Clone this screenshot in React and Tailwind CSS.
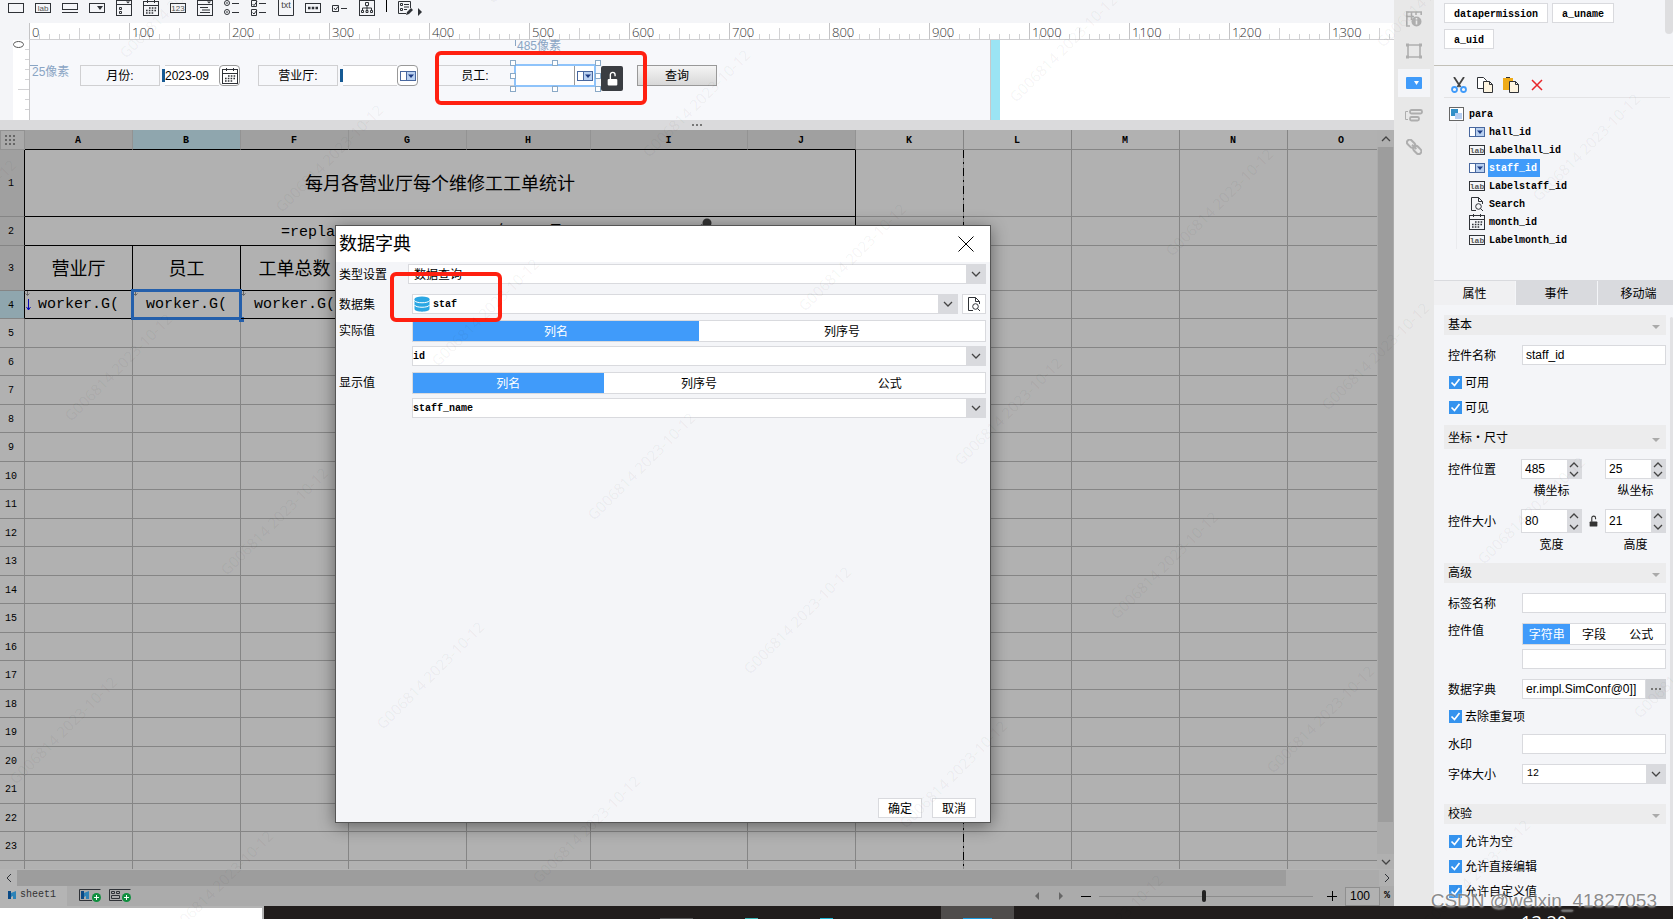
import { useState } from "react";

const MONO = "font-[family-name:'Liberation_Mono','Noto_Sans_CJK_SC',monospace]";

const COLUMNS = ["A", "B", "F", "G", "H", "I", "J", "K", "L", "M", "N", "O"];
const EMPTY_ROWS = Array.from({ length: 20 }, (_, i) => i + 5);

export default function App() {
  return (
    <div className="relative flex h-screen flex-col overflow-hidden bg-[#f4f5f8] font-[family-name:'Liberation_Sans','Noto_Sans_CJK_SC',sans-serif] text-xs text-black">
      <div className="flex min-h-0 flex-1">
        <main className="relative flex min-w-0 flex-1 flex-col">
          <WidgetToolbar />
          <ParamPane />
          <Spreadsheet />
          <StatusBar />
          <DictDialog />
        </main>
        <SideStrip />
        <Inspector />
      </div>
      <Taskbar />
      <Watermarks />
      <p className="pointer-events-none absolute right-4 bottom-1.5 text-[19px] leading-6 text-[#6e6e6e]/80 [text-shadow:0_0_2px_#fff]">
        CSDN @weixin_41827053
      </p>
    </div>
  );
}

/* ---------- icons ---------- */

function Icon({ children, className = "h-4 w-4", viewBox = "0 0 16 16" }) {
  return (
    <svg
      viewBox={viewBox}
      className={`${className} shrink-0`}
      fill="none"
      stroke="#2f3237"
      strokeWidth="1"
      aria-hidden="true"
    >
      {children}
    </svg>
  );
}

function LabIcon({ text = "lab" }) {
  return (
    <Icon>
      <rect x=".5" y="3.5" width="15" height="9" />
      <text x="8" y="11" textAnchor="middle" fontSize="8" fill="#555" stroke="none">
        {text}
      </text>
    </Icon>
  );
}

function CalendarIcon() {
  return (
    <Icon>
      <rect x=".5" y="1.5" width="15" height="14" />
      <path d="M0 5.5h16M4.5 0v3M11.5 0v3" />
      <path d="M6 8h8M3 10.5h11M3 13h8" strokeWidth="1.6" strokeDasharray="1.6 1.2" />
    </Icon>
  );
}

function ComboIcon() {
  return (
    <Icon>
      <rect x=".5" y="3.5" width="15" height="9" fill="#fff" stroke="#48679e" />
      <rect x="6.5" y="3.5" width="9" height="9" fill="#b9d0f0" stroke="#48679e" />
      <path d="M8 6.500h6L11 10z" fill="#1d3b82" stroke="none" />
    </Icon>
  );
}

function SearchDocIcon() {
  return (
    <Icon>
      <path d="M7 14.500H2.500V1.500H9.500L13.500 5.500V8M9.500 1.500V5.500H13.500" />
      <circle cx="9.500" cy="10.500" r="2.800" />
      <path d="M11.500 12.500l2.500 2.500" />
    </Icon>
  );
}

function Chevron({ up = false, className = "h-2 w-2.5" }) {
  return (
    <Icon viewBox="0 0 10 8" className={className}>
      <path d={up ? "M1 6l4-4 4 4" : "M1 2l4 4 4-4"} stroke="#444" strokeWidth="1.300" />
    </Icon>
  );
}

function LockOpen({ color, className }) {
  return (
    <Icon viewBox="0 0 10 14" className={className}>
      <path d="M3 8V3.500a2.200 2.200 0 0 1 4.400 0V5" stroke={color} strokeWidth="1.300" />
      <rect x=".5" y="7.500" width="9" height="6" rx="1" fill={color} stroke="none" />
    </Icon>
  );
}

/* ---------- widget toolbar ---------- */

function WidgetToolbar() {
  return (
    <div className="flex h-[23px] items-start gap-[11px] overflow-hidden pl-2">
      <Icon><rect x=".5" y="3.5" width="15" height="9" /></Icon>
      <LabIcon />
      <Icon>
        <rect x=".5" y="3.5" width="15" height="6" />
        <path d="M0 12.500h16" />
      </Icon>
      <Icon>
        <rect x=".5" y="3.5" width="15" height="9" />
        <path d="M8 6h6l-3 4z" fill="#2f3237" stroke="none" />
      </Icon>
      <Icon>
        <rect x=".5" y=".5" width="15" height="15" />
        <path d="M0 4.500h16" />
        <path d="M10 1.500h4l-2 2z" fill="#2f3237" stroke="none" />
        <path d="M3.500 7.500h2v2h-2zM3.500 11.500h2v2h-2z" />
      </Icon>
      <CalendarIcon />
      <LabIcon text="123" />
      <Icon>
        <rect x=".5" y=".5" width="15" height="15" />
        <path d="M0 4.500h16M3 7.500h8M5 10h8M3 12.500h10" />
        <path d="M10 1.500h4l-2 2z" fill="#2f3237" stroke="none" />
      </Icon>
      <Icon>
        <circle cx="3" cy="3" r="2.500" />
        <circle cx="3" cy="12" r="2.500" />
        <path d="M2 3h2M2 12h2M8 3.500h7M8 12.500h7" />
      </Icon>
      <Icon>
        <path d="M.5.5h5v6h-5zM.5 9.500h5v6h-5zM8 3.500h7M8 12.500h7M1.500 4l1.500 1.500 3-4M1.500 12.500L3 14l3-4" />
      </Icon>
      <Icon>
        <path d="M.5 0v15.500h15V0" />
        <text x="8" y="8" textAnchor="middle" fontSize="9" fill="#444" stroke="none">txt</text>
      </Icon>
      <Icon>
        <rect x=".5" y="3.5" width="15" height="9" />
        <path d="M3 8h10" strokeWidth="2.500" strokeDasharray="2.500 1.250" />
      </Icon>
      <Icon>
        <path d="M.5 5.500h6v6h-6zM2 8l1.500 2L6 6.500M9 8.500h6" />
      </Icon>
      <Icon>
        <rect x=".5" y=".5" width="15" height="15" />
        <path d="M6.500 2.500h3v3h-3zM2.500 10.500h2v2h-2zM7 10.500h2v2H7zM11.500 10.500h2v2h-2zM8 6v4M3.500 10V8h9v2" />
      </Icon>
      <span className="h-3 w-px bg-black" />
      <div className="flex gap-1">
        <Icon>
          <path d="M8 13.500H.5V1.500h12V8" />
          <path d="M2.500 3.500h2v2h-2zM2.500 8.500h2v2h-2zM6 4.500h5M6 7h5M6 9.500h3" />
          <path d="M8 15l1-3 4-4 2 2-4 4z" fill="#2f3237" stroke="none" />
        </Icon>
        <Icon viewBox="0 0 4 16" className="h-4 w-1">
          <path d="M0 8l4 4-4 4z" fill="#2f3237" stroke="none" />
        </Icon>
      </div>
    </div>
  );
}

/* ---------- parameter pane ---------- */

function Ruler() {
  const marks = Array.from({ length: 14 }, (_, i) => i * 100);
  return (
    <div className="ml-[29px] flex h-[17px] overflow-hidden border-b border-[#d0d0d2] bg-white">
      {marks.map((mark) => (
        <div
          key={mark}
          className="relative w-[100px] shrink-0 border-l border-[#c4c4c6] pl-0.5 font-[family-name:'Open_Sans',sans-serif] text-[13px] leading-[18px] font-light text-[#333]"
        >
          <svg className="absolute inset-0 h-4 w-full" stroke="#d2d2d4" aria-hidden="true">
            <path d="M49.500 5v11M9.500 11v5M19.500 11v5M29.500 11v5M39.500 11v5M59.500 11v5M69.500 11v5M79.500 11v5M89.500 11v5" />
          </svg>
          <span className="relative">{mark}</span>
        </div>
      ))}
    </div>
  );
}

function ParamPane() {
  return (
    <section className="shrink-0">
      <Ruler />
      <div className="flex h-20">
        <div className="ml-[13px] w-[17px] shrink-0 border-r border-[#c8c8ca] bg-white">
          <svg className="h-20 w-4" stroke="#d2d2d4" aria-hidden="true">
            <path d="M12 9.500h4M12 19.500h4M12 29.500h4M12 39.500h4M5 49.500h11M12 59.500h4M12 69.500h4" />
            <ellipse cx="5.500" cy="4.500" rx="5" ry="3" fill="none" stroke="#555" />
          </svg>
        </div>
        {/* widget canvas, items sit at their own design coordinates */}
        <div className="relative w-[961px] shrink-0 border-r border-[#c8c8ca] bg-[#f7f8fb]">
          <span className="absolute top-[25px] left-0 w-2 border-t border-[#8aa5c4]" />
          <span className="absolute top-[24px] left-[2px] leading-4 text-[#8aa5c4]">25像素</span>
          <span className="absolute top-0 left-[485px] h-1.5 border-l border-[#8aa5c4]" />
          <span className="absolute -top-0.5 left-[487px] leading-4 text-[#8aa5c4]">485像素</span>

          <label htmlFor="p-month" className="absolute top-[25px] left-[50px] flex h-[21px] w-20 items-center justify-center border border-[#d0d0d2]">
            月份:
          </label>
          <div className="absolute top-[25px] left-[130px] flex h-[21px] w-20">
            <span className="my-1 ml-0.5 w-[3px] bg-[#165a94]" />
            <input id="p-month" defaultValue="2023-09" className="min-w-0 flex-1 border-y border-[#d0d0d2] bg-white" />
            <button aria-label="选择月份" className="flex w-[21px] items-center justify-center rounded-sm border border-[#999] bg-white">
              <CalendarIcon />
            </button>
          </div>

          <label htmlFor="p-hall" className="absolute top-[25px] left-[228px] flex h-[21px] w-20 items-center justify-center border border-[#d0d0d2]">
            营业厅:
          </label>
          <div className="absolute top-[25px] left-[308px] flex h-[21px] w-20">
            <span className="my-1 ml-0.5 w-[3px] bg-[#165a94]" />
            <input id="p-hall" className="min-w-0 flex-1 border-y border-[#d0d0d2] bg-white" />
            <button aria-label="选择营业厅" className="flex w-[21px] items-center justify-center rounded-sm border border-[#999] bg-white">
              <ComboIcon />
            </button>
          </div>

          <label htmlFor="p-staff" className="absolute top-[25px] left-[405px] flex h-[21px] w-20 items-center justify-center border-y border-[#d0d0d2]">
            员工:
          </label>
          <div className="absolute top-[24px] left-[484px] flex h-[23px] w-[82px] border-2 border-[#8ec3fa] bg-white">
            <input id="p-staff" className="min-w-0 flex-1" />
            <span className="flex w-5 items-center justify-center border-l border-[#999]">
              <ComboIcon />
            </span>
          </div>
          <SelectionHandles />
          <button aria-label="解锁" className="absolute top-[26px] left-[571px] flex h-[25px] w-[22px] items-center justify-center rounded-xs bg-[#3a3d42]">
            <LockOpen color="#fff" className="h-[15px] w-[11px]" />
          </button>
          <button className="absolute top-[25px] left-[607px] h-[21px] w-20 border border-[#999] bg-gradient-to-b from-[#f4f4f4] to-[#d8d8d8]">
            查询
          </button>
          <span className="pointer-events-none absolute top-[11px] left-[405px] h-[54px] w-[212px] rounded-md border-4 border-[#ff2010]" />
        </div>
        <div className="w-[9px] shrink-0 bg-[#9be4f4]" />
        <div className="flex-1 bg-white" />
      </div>
      <div className="flex h-2.5 items-center justify-center gap-0.5 bg-[#dadadc]">
        <span className="size-0.5 bg-[#777]" />
        <span className="size-0.5 bg-[#777]" />
        <span className="size-0.5 bg-[#777]" />
      </div>
    </section>
  );
}

function SelectionHandles() {
  const points = [[0, 0], [42, 0], [85, 0], [0, 13], [85, 13], [0, 26], [42, 26], [85, 26]];
  return (
    <svg className="absolute top-[20px] left-[480px] h-8 w-24" aria-hidden="true">
      {points.map(([x, y]) => (
        <rect key={`${x}-${y}`} x={x + 0.5} y={y + 0.5} width="5" height="5" fill="#fff" stroke="#8aa9c6" />
      ))}
    </svg>
  );
}

/* ---------- spreadsheet ---------- */

function RowHead({ n, className }) {
  return (
    <th className={`border-r border-b border-[#858585] p-0 pt-0.5 pr-0.5 text-center font-normal ${className}`}>{n}</th>
  );
}

function PlainCells({ count }) {
  return Array.from({ length: count }, (_, i) => (
    <td key={i} className="border-r border-b border-[#858585] p-0" />
  ));
}

function TextCell({ children }) {
  return (
    <td className="border-r border-b border-black p-0 pt-[3px] text-center text-lg">{children}</td>
  );
}

function FormulaCell({ first = false, selected = false }) {
  return (
    <td className="relative border-r border-b border-black p-0 pt-0.5 text-center align-top text-[15px] leading-6">
      <svg className="absolute top-0 left-0 h-6 w-4" fill="none" aria-hidden="true">
        <path d="M2.500 0v4M.5 2.500l2 2 2-2" stroke="#666" />
        {first && <path d="M3.500 8v11M1.500 16l2 3 2-3" stroke="#0808b8" />}
      </svg>
      worker.G(
      {selected && (
        <>
          <span className="absolute -top-0.5 -right-0.5 -bottom-0.5 -left-0.5 border-3 border-[#245fab]" />
          <span className="absolute -right-1 -bottom-1 size-[5px] bg-[#245fab]" />
        </>
      )}
    </td>
  );
}

function Spreadsheet() {
  return (
    <section className="flex min-h-0 flex-1 flex-col">
      <div className="flex min-h-0 flex-1">
        <div className="relative min-w-0 flex-1 overflow-hidden bg-[#b1b1b1]">
          <table className={`w-0 table-fixed border-separate border-spacing-0 text-[10px] ${MONO}`}>
            <colgroup>
              <col className="w-[25px]" />
              <col className="w-[108px]" />
              <col className="w-[108px]" />
              <col className="w-[108px]" />
              <col className="w-[118px]" />
              <col className="w-[124px]" />
              <col className="w-[157px]" />
              <col className="w-[108px]" />
              <col className="w-[108px]" />
              <col className="w-[108px]" />
              <col className="w-[108px]" />
              <col className="w-[108px]" />
              <col className="w-[108px]" />
            </colgroup>
            <thead>
              <tr className="h-5">
                <th className="border border-[#929292] bg-[#a9a9a9] p-0">
                  <svg className="ml-[3px] size-3" fill="#666" aria-hidden="true">
                    {[1, 5, 9].map((y) => [1, 5, 9].map((x) => <rect key={`${x}-${y}`} x={x} y={y} width="2" height="2" />))}
                  </svg>
                </th>
                {COLUMNS.map((name, i) => (
                  <th
                    key={name}
                    className={`border-r border-b p-0 pt-[3px] pr-px text-center leading-4 font-bold ${
                      i < 7 ? "border-r-[#939393] border-b-black" : "border-[#858585]"
                    } ${name === "B" ? "bg-[#8fa6ae]" : i < 7 ? "bg-[#a0a0a0]" : "bg-[#b1b1b1]"}`}
                  >
                    {name}
                  </th>
                ))}
              </tr>
            </thead>
            <tbody>
              <tr className="h-[67px]">
                <RowHead n={1} className="border-r-black bg-[#a0a0a0]" />
                <td colSpan={7} className="border-r border-b border-black p-0 pt-[3px] text-center text-lg">
                  每月各营业厅每个维修工工单统计
                </td>
                <PlainCells count={5} />
              </tr>
              <tr className="h-[29px]">
                <RowHead n={2} className="border-r-black bg-[#a0a0a0]" />
                <td colSpan={7} className="border-r border-b border-black p-0 pt-1 text-center text-[15px] leading-5 whitespace-nowrap">
                  =replace($month_id,"-","年")+"月"+""
                </td>
                <PlainCells count={5} />
              </tr>
              <tr className="h-[45px]">
                <RowHead n={3} className="border-r-black bg-[#a0a0a0]" />
                <TextCell>营业厅</TextCell>
                <TextCell>员工</TextCell>
                <TextCell>工单总数</TextCell>
                <TextCell />
                <TextCell />
                <TextCell />
                <TextCell />
                <PlainCells count={5} />
              </tr>
              <tr className="h-7">
                <RowHead n={4} className="border-r-black bg-[#8fa6ae]" />
                <FormulaCell first />
                <FormulaCell selected />
                <FormulaCell />
                <TextCell />
                <TextCell />
                <TextCell />
                <TextCell />
                <PlainCells count={5} />
              </tr>
              {EMPTY_ROWS.map((n) => (
                <tr key={n} className={n % 2 ? "h-[29px]" : "h-7"}>
                  <RowHead n={n === 24 ? "" : n} className="bg-[#b1b1b1]" />
                  <PlainCells count={12} />
                </tr>
              ))}
            </tbody>
          </table>
          {/* page break */}
          <span className="absolute top-5 bottom-0 left-[963px] w-px bg-[repeating-linear-gradient(to_bottom,#000_0_8px,#858585_8px_12px,#000_12px_14px,#858585_14px_18px)]" />
          <svg className="absolute top-[87px] left-[698px] h-3 w-4" fill="#333" aria-hidden="true">
            <circle cx="9" cy="6" r="4.500" />
            <path d="M0 10l4-3 2 3z" />
          </svg>
        </div>
        <div className="flex w-[17px] flex-col bg-[#ababab]">
          <button aria-label="上滚" className="flex h-[17px] items-center justify-center bg-[#b0b0b0]">
            <Chevron up />
          </button>
          <div className="mb-8 flex-1 border-x border-[#ababab] bg-[#9d9d9d]" />
          <button aria-label="下滚" className="flex h-[15px] items-center justify-center bg-[#b0b0b0]">
            <Chevron />
          </button>
        </div>
      </div>
      <div className="flex h-[17px] border-t border-[#b4b4b4] bg-[#ababab]">
        <button aria-label="左滚" className="flex w-[17px] items-center justify-center bg-[#b4b4b4]">
          <Icon viewBox="0 0 8 10" className="h-2.5 w-2"><path d="M6 1L2 5l4 4" /></Icon>
        </button>
        <div className="mr-[93px] flex-1 bg-[#9d9d9d]" />
        <button aria-label="右滚" className="flex w-[15px] items-center justify-center bg-[#b0b0b0]">
          <Icon viewBox="0 0 8 10" className="h-2.5 w-2"><path d="M2 1l4 4-4 4" /></Icon>
        </button>
      </div>
    </section>
  );
}

function AddBadge() {
  return (
    <>
      <circle cx="17.500" cy="9.500" r="4.500" fill="#0f8f3f" stroke="none" />
      <path d="M15 9.500h5M17.500 7v5" stroke="#fff" />
    </>
  );
}

function StatusBar() {
  return (
    <footer className="flex h-5 shrink-0 items-center bg-[#ababab]">
      <button className={`flex h-5 w-[67px] items-center gap-1 bg-[#b4b4b4] pb-0.5 pl-2 text-[10px] text-[#333] ${MONO}`}>
        <Icon viewBox="0 0 8 8" className="size-2">
          <path d="M0 0h3v8H0z" fill="#0a4a86" stroke="none" />
          <path d="M3 2l5-2v8H5V5L3 6z" fill="#2d83b8" stroke="none" />
        </Icon>
        sheet1
      </button>
      <button aria-label="新增报表" className="ml-3">
        <Icon viewBox="0 0 22 16" className="h-4 w-[22px]">
          <path d="M13 12.500H.5V1.500h21" />
          <path d="M2 3h3v8H2z" fill="#0a4a86" stroke="none" />
          <path d="M5 5l5-2v8H7V8L5 9z" fill="#2d83b8" stroke="none" />
          <AddBadge />
        </Icon>
      </button>
      <button aria-label="新增聚合块" className="ml-2">
        <Icon viewBox="0 0 22 16" className="h-4 w-[22px]">
          <path d="M13 12.500H.5V1.500h21M2.500 3.500h3v2h-3zM7.500 3.500h3v2h-3zM2.500 7.500h8v3h-8z" />
          <AddBadge />
        </Icon>
      </button>
      <div className="ml-auto flex items-center">
        <Icon viewBox="0 0 4 8" className="h-2 w-1"><path d="M4 0v8L0 4z" fill="#666" stroke="none" /></Icon>
        <Icon viewBox="0 0 4 8" className="ml-5 h-2 w-1"><path d="M0 0v8l4-4z" fill="#666" stroke="none" /></Icon>
        <span className="ml-[18px] h-px w-2.5 bg-black" />
        <input
          type="range"
          aria-label="缩放"
          defaultValue="49"
          className="ml-2 h-3 w-[214px] appearance-none bg-[linear-gradient(#8c8c8c,#8c8c8c)] bg-[length:100%_1px] bg-center bg-no-repeat [&::-webkit-slider-thumb]:h-3 [&::-webkit-slider-thumb]:w-1 [&::-webkit-slider-thumb]:appearance-none [&::-webkit-slider-thumb]:rounded-xs [&::-webkit-slider-thumb]:bg-[#222]"
        />
        <Icon viewBox="0 0 10 10" className="ml-3.5 size-2.5"><path d="M0 5.500h10M5.500 0v10" stroke="#000" /></Icon>
        <input aria-label="缩放比例" defaultValue="100" className="ml-2 h-[19px] w-[35px] border border-[#8f8f8f] bg-[#b1b1b1] px-1" />
        <span className={`ml-1 w-2.5 text-[10px] font-bold ${MONO}`}>%</span>
      </div>
    </footer>
  );
}

/* ---------- dictionary dialog ---------- */

function DropField({ id, value, className = "pl-0" }) {
  return (
    <div className="flex h-5 flex-1 border border-[#d9dade] bg-white">
      <select id={id} aria-label={id} defaultValue={value} className={`min-w-0 flex-1 appearance-none ${className}`}>
        <option>{value}</option>
      </select>
      <span className="flex w-[19px] items-center justify-center bg-[#d9dade]">
        <Chevron />
      </span>
    </div>
  );
}

function Segmented({ options }) {
  const [active, setActive] = useState(options[0]);
  return (
    <div className="flex h-[22px] flex-1 border border-[#d9dade] bg-white">
      {options.map((option) => (
        <button
          key={option}
          type="button"
          onClick={() => setActive(option)}
          className={`flex-1 pt-px ${option === active ? "bg-[#409bfa] text-white" : "bg-white"}`}
        >
          {option}
        </button>
      ))}
    </div>
  );
}

function DictDialog() {
  return (
    <div
      role="dialog"
      aria-label="数据字典"
      className="absolute top-[225px] left-[335px] flex h-[598px] w-[656px] flex-col border border-[#555] bg-[#f4f5f8] shadow-[0_3px_16px_rgba(0,0,0,0.45)]"
    >
      <div className="flex h-9 items-center justify-between bg-white pr-4 pl-[3px]">
        <h2 className="text-lg">数据字典</h2>
        <button aria-label="关闭">
          <Icon><path d="M.5.5l15 15M15.500.5l-15 15" stroke="#000" /></Icon>
        </button>
      </div>
      <div className="flex flex-col pt-0.5 pr-1 pl-[3px]">
        <div className="flex items-center">
          <label htmlFor="类型设置" className="w-[69px] pt-0.5">类型设置</label>
          <DropField id="类型设置" value="数据查询" className="pt-0.5 pl-[5px]" />
        </div>
        <div className="mt-2.5 flex items-center">
          <label htmlFor="数据集" className="w-[73px] pt-0.5">数据集</label>
          <div className="flex h-5 flex-1 border border-[#d9dade] bg-white">
            <Icon className="mt-px ml-px h-4 w-4">
              <path d="M.5 3v10c0 3.500 15 3.500 15 0V3z" fill="#2ba7e3" stroke="none" />
              <ellipse cx="8" cy="3" rx="7.500" ry="2.500" fill="#2ba7e3" stroke="none" />
              <path d="M.5 4.500c1 3 14 3 15 0M.5 9c1 3 14 3 15 0" stroke="#fff" />
            </Icon>
            <select id="数据集" className={`min-w-0 flex-1 appearance-none pt-0.5 pl-[3px] text-[10px] font-bold ${MONO}`}>
              <option>staf</option>
            </select>
            <span className="flex w-[19px] items-center justify-center bg-[#d9dade]">
              <Chevron />
            </span>
          </div>
          <button aria-label="预览" className="ml-1 flex h-5 w-6 items-center justify-center border border-[#d9dade] bg-white">
            <SearchDocIcon />
          </button>
        </div>
        <div className="mt-1.5 flex items-center">
          <span className="w-[73px]">实际值</span>
          <Segmented options={["列名", "列序号"]} />
        </div>
        <div className="mt-1 flex pl-[73px]">
          <DropField id="实际值列" value="id" className={`pt-0.5 text-[10px] font-bold ${MONO}`} />
        </div>
        <div className="mt-1.5 flex items-center">
          <span className="w-[73px]">显示值</span>
          <Segmented options={["列名", "列序号", "公式"]} />
        </div>
        <div className="mt-1 flex pl-[73px]">
          <DropField id="显示值列" value="staff_name" className={`pt-0.5 text-[10px] font-bold ${MONO}`} />
        </div>
      </div>
      <div className="mt-auto flex justify-end gap-2.5 pr-3.5 pb-1">
        <button className="h-5 w-11 border border-[#d9dade] bg-white pt-px">确定</button>
        <button className="h-5 w-11 border border-[#d9dade] bg-white pt-px">取消</button>
      </div>
      <span className="pointer-events-none absolute top-[46px] left-[54px] h-[50px] w-[112px] rounded-md border-4 border-[#ff2010]" />
    </div>
  );
}

/* ---------- right side ---------- */

function SideStrip() {
  return (
    <nav className="flex w-10 shrink-0 flex-col gap-1 bg-[#e8e8e8] px-1 pt-[5px]">
      <button aria-label="单元格元素" className="flex h-7 items-center justify-center">
        <Icon>
          <path d="M4 15H.8V1h14.400v3M.8 5.500H8M5.500 1v8M10 1v3" stroke="#aeaeae" strokeWidth="1.600" />
          <circle cx="10.500" cy="10.500" r="5" fill="#aeaeae" stroke="none" />
          <path d="M10.500 7v1.500M10.500 9.500v4" stroke="#e8e8e8" strokeWidth="1.600" />
        </Icon>
      </button>
      <button aria-label="单元格属性" className="flex h-7 items-center justify-center">
        <Icon>
          <path d="M2 2h12v12H2z" stroke="#aeaeae" strokeWidth="1.600" />
          <path d="M0 .5h3v3H0zM13 .5h3v3h-3zM0 12.500h3v3H0zM13 12.500h3v3h-3z" fill="#aeaeae" stroke="none" />
        </Icon>
      </button>
      <button aria-label="控件设置" className="flex h-7 items-center justify-center bg-[#f4f5f8]">
        <Icon>
          <rect x="0" y="2" width="16" height="12" rx="1" fill="#409bfa" stroke="none" />
          <path d="M8 6h5l-2.500 4z" fill="#fff" stroke="none" />
        </Icon>
      </button>
      <button aria-label="条件属性" className="flex h-7 items-center justify-center">
        <Icon viewBox="0 0 18 16" className="h-4 w-[18px]">
          <path d="M3 4.500H.5v8H3" stroke="#aeaeae" />
          <rect x="5" y="3" width="12" height="3.500" rx="1.500" stroke="#aeaeae" strokeWidth="1.800" />
          <rect x="5" y="10" width="9" height="3.500" rx="1.500" stroke="#aeaeae" strokeWidth="1.800" />
        </Icon>
      </button>
      <button aria-label="超级链接" className="flex h-7 items-center justify-center">
        <Icon>
          <g stroke="#aeaeae" strokeWidth="2" transform="rotate(45 8 8)">
            <rect x="-1" y="5" width="9" height="5.500" rx="2.700" />
            <rect x="8" y="5" width="9" height="5.500" rx="2.700" />
            <path d="M5 7.750h6" />
          </g>
        </Icon>
      </button>
    </nav>
  );
}

const TREE = [
  ["hall_id", "combo"],
  ["Labelhall_id", "label"],
  ["staff_id", "combo"],
  ["Labelstaff_id", "label"],
  ["Search", "search"],
  ["month_id", "date"],
  ["Labelmonth_id", "label"],
];

const TREE_ICONS = {
  combo: <ComboIcon />,
  label: <LabIcon />,
  search: <SearchDocIcon />,
  date: <CalendarIcon />,
};

function Inspector() {
  return (
    <aside className="flex w-[239px] shrink-0 flex-col overflow-hidden">
      <div className="flex border-b border-[#c2c0b8]">
        <div className={`flex flex-1 flex-wrap gap-x-1 gap-y-1.5 pt-[3px] pb-4 pl-2.5 text-[10px] font-bold ${MONO}`}>
          <button className="h-5 border border-[#d9dade] bg-white px-[9px] pt-[3px]">datapermission</button>
          <button className="h-5 border border-[#d9dade] bg-white px-[9px] pt-[3px]">a_uname</button>
          <button className="h-5 border border-[#d9dade] bg-white px-[9px] pt-[3px]">a_uid</button>
        </div>
        <span className="h-[34px] w-2 rounded-b-sm bg-[#dedee0]" />
      </div>

      <div className="mr-[3px] ml-2.5 flex gap-2.5 border-b border-[#e3e3e5] pt-[11px] pb-1 pl-[7px]">
        <button aria-label="剪切">
          <Icon>
            <path d="M3 0l6.500 10M13 0L6.500 10" stroke="#444" strokeWidth="1.800" />
            <circle cx="3.500" cy="12.500" r="2.500" stroke="#409bfa" strokeWidth="1.800" />
            <circle cx="12.500" cy="12.500" r="2.500" stroke="#409bfa" strokeWidth="1.800" />
          </Icon>
        </button>
        <button aria-label="复制">
          <Icon>
            <path d="M.5.5h6l3 3v8h-9z" fill="#fff" />
            <path d="M6.500 4.500h6l3 3v8h-9zM12.500 4.500v3h3" fill="#fdf4e0" />
          </Icon>
        </button>
        <button aria-label="粘贴">
          <Icon>
            <path d="M0 1h10v12H0z" fill="#efab18" stroke="none" />
            <path d="M3 .5h4" />
            <path d="M6.500 4.500h6l3 3v8h-9zM12.500 4.500v3h3" fill="#fdf4e0" />
          </Icon>
        </button>
        <button aria-label="删除">
          <Icon><path d="M3 3l10 10M13 3L3 13" stroke="#e8262a" strokeWidth="1.500" /></Icon>
        </button>
      </div>

      <div className={`pt-[7px] pb-[31px] pl-[15px] text-[10px] font-bold ${MONO}`}>
        <div className="flex h-[18px] items-center gap-1">
          <Icon>
            <rect x=".5" y="1.500" width="14" height="13" fill="#fff" stroke="#666" />
            <path d="M2 3h7v7H2z" fill="#3390c8" stroke="none" />
            <path d="M6 7h7v6H6z" fill="#b7cff2" stroke="none" />
          </Icon>
          <span className="pt-0.5">para</span>
        </div>
        <ul className="ml-[7px] border-l border-[#eaebee] pl-3">
          {TREE.map(([name, kind]) => (
            <li key={name} className="flex h-[18px] items-center gap-[3px]">
              {TREE_ICONS[kind]}
              <span
                className={
                  name === "staff_id"
                    ? "flex h-[18px] items-center bg-[#409bfa] px-px pt-0.5 pr-[3px] text-white"
                    : "flex h-[18px] items-center px-px pt-0.5"
                }
              >
                {name}
              </span>
            </li>
          ))}
        </ul>
      </div>

      <div className="flex shrink-0 gap-px overflow-hidden border-t border-[#d9dade]">
        <button className="h-6 w-[81px] shrink-0 bg-[#f0f0f2] pt-px">属性</button>
        <button className="h-6 w-[81px] shrink-0 bg-[#d9dade] pt-px">事件</button>
        <button className="h-6 w-[81px] shrink-0 bg-[#d9dade] pt-px">移动端</button>
      </div>
      <Properties />
    </aside>
  );
}

function SectionHead({ title, className = "h-5" }) {
  return (
    <button type="button" className={`flex shrink-0 items-center justify-between bg-[#ececed] pr-1.5 pl-1 ${className}`}>
      {title}
      <Icon viewBox="0 0 8 4" className="mt-1 h-1 w-2"><path d="M0 0h8L4 4z" fill="#aaa" stroke="none" /></Icon>
    </button>
  );
}

function CheckRow({ label }) {
  return (
    <label className="flex h-[15px] shrink-0 items-center gap-[3px] pl-[5px]">
      <span className="grid">
        <input type="checkbox" defaultChecked className="peer col-start-1 row-start-1 size-[13px] appearance-none border border-[#3593ee] bg-white checked:bg-[#3593ee]" />
        <Icon viewBox="0 0 13 13" className="pointer-events-none invisible col-start-1 row-start-1 size-[13px] peer-checked:visible">
          <path d="M2.500 6.500l3 3 5-6.500" stroke="#fff" strokeWidth="1.700" />
        </Icon>
      </span>
      {label}
    </label>
  );
}

function TextRow({ label, value = "" }) {
  return (
    <label className="flex h-5 shrink-0 items-center pl-1">
      <span className="w-[74px] shrink-0 pt-px">{label}</span>
      <input defaultValue={value} className="h-5 min-w-0 flex-1 border border-[#d9dade] bg-white px-[3px]" />
    </label>
  );
}

function Spinner({ value, caption, className = "h-5" }) {
  return (
    <label className="w-[61px]">
      <span className={`flex border border-[#d9dade] bg-white ${className}`}>
        <input defaultValue={value} className="min-w-0 flex-1 px-[3px]" />
        <span className="flex w-3.5 flex-col items-center justify-around bg-[#d9dade]">
          <Chevron up />
          <Chevron />
        </span>
      </span>
      <span className="block pt-1 text-center leading-4">{caption}</span>
    </label>
  );
}

function Properties() {
  return (
    <div className="flex min-h-0 flex-1 overflow-hidden">
      <form className="flex min-w-0 flex-1 flex-col gap-2.5 pt-2.5 pr-1 pl-2.5">
        <SectionHead title="基本" />
        <TextRow label="控件名称" value="staff_id" />
        <CheckRow label="可用" />
        <CheckRow label="可见" />

        <SectionHead title="坐标・尺寸" className="h-6 pt-0.5" />
        <div className="flex shrink-0 pl-1">
          <span className="w-[73px] shrink-0 pt-px leading-5">控件位置</span>
          <div className="flex flex-1 justify-between">
            <Spinner value="485" caption="横坐标" />
            <Spinner value="25" caption="纵坐标" />
          </div>
        </div>
        <div className="flex shrink-0 pl-1">
          <span className="w-[73px] shrink-0 pt-px leading-6">控件大小</span>
          <div className="flex flex-1 justify-between">
            <Spinner value="80" caption="宽度" className="h-6" />
            <LockOpen color="#333" className="mt-1.5 h-3 w-[9px]" />
            <Spinner value="21" caption="高度" className="h-6" />
          </div>
        </div>

        <SectionHead title="高级" />
        <TextRow label="标签名称" />
        <div className="flex shrink-0 pl-1">
          <span className="w-[74px] shrink-0 leading-4">控件值</span>
          <div className="flex flex-1 flex-col gap-1">
            <div className="flex"><Segmented options={["字符串", "字段", "公式"]} /></div>
            <input aria-label="控件值" className="h-5 w-full border border-[#d9dade] bg-white" />
          </div>
        </div>
        <div className="flex h-5 shrink-0 items-center pl-1">
          <label htmlFor="dict" className="w-[74px] shrink-0 pt-px">数据字典</label>
          <input id="dict" defaultValue="er.impl.SimConf@0]]" className="h-5 min-w-0 flex-1 border border-[#d9dade] bg-white px-[3px]" />
          <button type="button" aria-label="编辑数据字典" className="flex h-5 w-5 items-center justify-center gap-0.5 bg-[#cfd1d5]">
            <span className="size-0.5 bg-[#777]" />
            <span className="size-0.5 bg-[#777]" />
            <span className="size-0.5 bg-[#777]" />
          </button>
        </div>
        <CheckRow label="去除重复项" />
        <TextRow label="水印" />
        <div className="flex h-5 shrink-0 items-center pl-1">
          <label htmlFor="字体大小" className="w-[74px] shrink-0 pt-px">字体大小</label>
          <DropField id="字体大小" value="12" className={`pl-1 text-[10px] ${MONO}`} />
        </div>

        <SectionHead title="校验" className="mt-2.5 h-5" />
        <CheckRow label="允许为空" />
        <CheckRow label="允许直接编辑" />
        <CheckRow label="允许自定义值" />
      </form>
      <span className="mt-3 w-[3px] rounded-sm bg-[#e2e2e4]" />
    </div>
  );
}

/* ---------- taskbar ---------- */

function Taskbar() {
  return (
    <div className="flex h-[13px] shrink-0 overflow-hidden bg-[#211d1c]">
      <span className="w-[264px] border-t-2 border-r-2 border-[#b4b4b4] bg-white" />
      <div className="flex flex-1 items-end">
        <span className="ml-[396px] h-px w-[33px] bg-[#555]" />
        <span className="ml-[52px] h-px w-[13px] bg-[#3fb8b8]" />
        <span className="ml-[62px] h-px w-[13px] bg-[#22b8d6]" />
        <span className="ml-[108px] flex h-full w-[73px] items-end justify-center bg-[#4f4c4b]">
          <span className="h-px w-[29px] bg-[#1b9be0]" />
        </span>
      </div>
      <time className="mt-1 mr-[106px] font-[family-name:'Open_Sans',sans-serif] text-lg leading-6 text-white">13:20</time>
    </div>
  );
}

/* ---------- diagonal user stamp ---------- */

function Watermarks() {
  const marks = [];
  for (let p = -5; p < 8; p++) {
    for (let q = -5; q < 8; q++) {
      const x = 485 + p * 156 + q * 211;
      const y = 312 + p * 154 - q * 209;
      if (x > -80 && x < 1800 && y > -80 && y < 980) marks.push([x, y]);
    }
  }
  return (
    <div className="pointer-events-none absolute inset-0 overflow-hidden" aria-hidden="true">
      {marks.map(([x, y]) => (
        <span
          key={`${x},${y}`}
          className="absolute -translate-x-1/2 -translate-y-1/2 -rotate-45 font-[family-name:'Noto_Sans',sans-serif] text-[15px] leading-5 whitespace-nowrap text-black/5"
          style={{ left: x, top: y }}
        >
          G006814 2023-10-12
        </span>
      ))}
    </div>
  );
}
